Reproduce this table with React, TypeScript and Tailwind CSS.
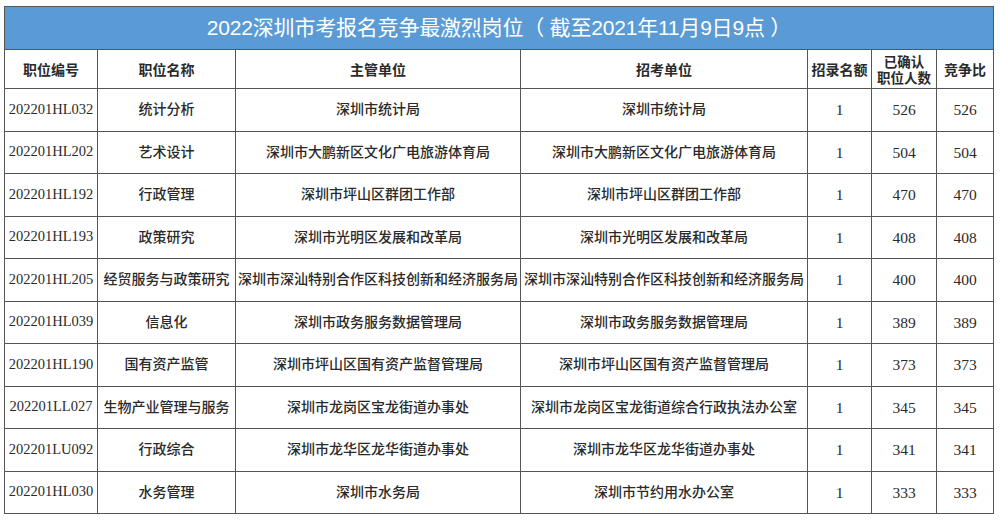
const rows = [
  ["202201HL032", "统计分析", "深圳市统计局", "深圳市统计局", "1", "526", "526"],
  ["202201HL202", "艺术设计", "深圳市大鹏新区文化广电旅游体育局", "深圳市大鹏新区文化广电旅游体育局", "1", "504", "504"],
  ["202201HL192", "行政管理", "深圳市坪山区群团工作部", "深圳市坪山区群团工作部", "1", "470", "470"],
  ["202201HL193", "政策研究", "深圳市光明区发展和改革局", "深圳市光明区发展和改革局", "1", "408", "408"],
  ["202201HL205", "经贸服务与政策研究", "深圳市深汕特别合作区科技创新和经济服务局", "深圳市深汕特别合作区科技创新和经济服务局", "1", "400", "400"],
  ["202201HL039", "信息化", "深圳市政务服务数据管理局", "深圳市政务服务数据管理局", "1", "389", "389"],
  ["202201HL190", "国有资产监管", "深圳市坪山区国有资产监督管理局", "深圳市坪山区国有资产监督管理局", "1", "373", "373"],
  ["202201LL027", "生物产业管理与服务", "深圳市龙岗区宝龙街道办事处", "深圳市龙岗区宝龙街道综合行政执法办公室", "1", "345", "345"],
  ["202201LU092", "行政综合", "深圳市龙华区龙华街道办事处", "深圳市龙华区龙华街道办事处", "1", "341", "341"],
  ["202201HL030", "水务管理", "深圳市水务局", "深圳市节约用水办公室", "1", "333", "333"],
];

const widths = ["w-[93px]", "w-[138px]", "w-[285px]", "w-[287px]", "w-[64px]", "w-[65px]", "w-[57px]"];

export default function App() {
  return (
    <div className="w-[1000px] h-[520px] bg-white pt-[6px] pl-[4px]">
      <table className="w-[989px] table-fixed border-collapse text-[#2a2a2a] font-['Liberation_Serif','Noto_Sans_CJK_SC',serif]">
        <colgroup>
          {widths.map((w, i) => (
            <col key={i} className={w} />
          ))}
        </colgroup>
        <thead>
          <tr className="h-[43px]">
            <th
              colSpan={7}
              className="bg-[#5b9bd5] border border-[#555] text-white text-[21px] font-normal font-['Liberation_Sans','Noto_Sans_CJK_SC',sans-serif] tracking-[-0.2px] whitespace-pre"
            >
              2022深圳市考报名竞争最激烈岗位（ 截至2021年11月9日9点 ）
            </th>
          </tr>
          <tr className="h-[39px] text-[14px] leading-[16px] font-bold font-['Noto_Sans_CJK_SC',sans-serif]">
            <th className="border border-[#555]">职位编号</th>
            <th className="border border-[#555]">职位名称</th>
            <th className="border border-[#555]">主管单位</th>
            <th className="border border-[#555]">招考单位</th>
            <th className="border border-[#555] px-0 whitespace-nowrap">招录名额</th>
            <th className="border border-[#555] px-0">
              <div className="flex flex-col items-center text-[13.5px] leading-[16px]">
                <span>已确认</span>
                <span>职位人数</span>
              </div>
            </th>
            <th className="border border-[#555]">竞争比</th>
          </tr>
        </thead>
        <tbody>
          {rows.map((r, i) => (
            <tr key={i} className="h-[42.5px] text-[14px] text-center">
              {r.map((c, j) => (
                <td
                  key={j}
                  className={
                    "border border-[#555] whitespace-nowrap px-0 " +
                    (j === 0 ? "text-[14.5px]" : j >= 4 ? "text-[15.5px]" : "font-medium")
                  }
                >
                  {c}
                </td>
              ))}
            </tr>
          ))}
        </tbody>
      </table>
    </div>
  );
}
